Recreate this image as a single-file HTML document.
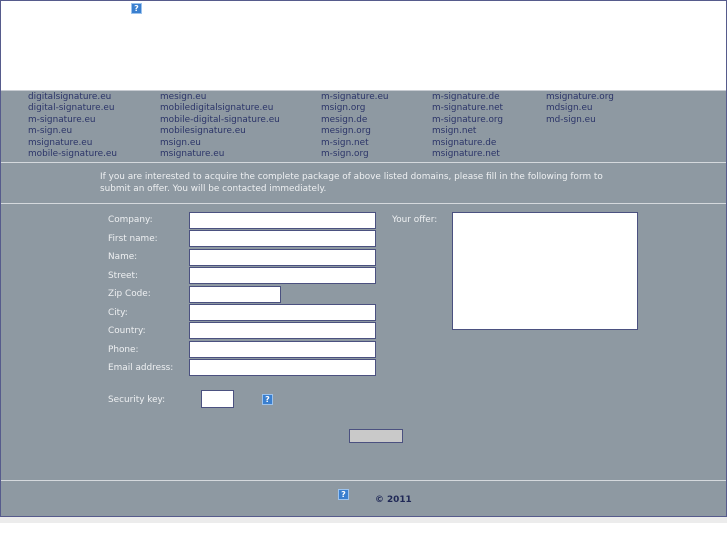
<!DOCTYPE html>
<html><head><style>
*{margin:0;padding:0;box-sizing:border-box}
body{width:727px;height:545px;background:#fff;position:relative;overflow:hidden;font-family:"DejaVu Sans","Liberation Sans",sans-serif;font-size:8.9px}
.a{position:absolute}
.frame{left:0;top:0;width:727px;height:517px;border:1px solid #565b8c;background:#8e99a2}
.top{left:1px;top:1px;width:725px;height:90px;background:#fff;border-bottom:1px solid #c8ccd2}
.d{color:#2b3468;line-height:11.4px;white-space:nowrap}
.hr{left:1px;width:725px;height:1px;background:#d5d9dd}
.l{color:#eef0f2;white-space:nowrap}
.in{background:#fff;border:1px solid #4b5180;height:17px}
.q{width:11px;height:11px;background:#3a7fcf;border:1px solid #9cc3ee;color:#fff;font-size:8px;line-height:9px;text-align:center;font-weight:bold}
</style></head><body>
<div class="a frame"></div>
<div class="a top"></div>
<div class="a q" style="left:131px;top:3px">?</div>
<div class="a d" style="left:28px;top:92px">digitalsignature.eu<br>digital-signature.eu<br>m-signature.eu<br>m-sign.eu<br>msignature.eu<br>mobile-signature.eu</div>
<div class="a d" style="left:160px;top:92px">mesign.eu<br>mobiledigitalsignature.eu<br>mobile-digital-signature.eu<br>mobilesignature.eu<br>msign.eu<br>msignature.eu</div>
<div class="a d" style="left:321px;top:92px">m-signature.eu<br>msign.org<br>mesign.de<br>mesign.org<br>m-sign.net<br>m-sign.org</div>
<div class="a d" style="left:432px;top:92px">m-signature.de<br>m-signature.net<br>m-signature.org<br>msign.net<br>msignature.de<br>msignature.net</div>
<div class="a d" style="left:546px;top:92px">msignature.org<br>mdsign.eu<br>md-sign.eu</div>
<div class="a hr" style="top:162px"></div>
<div class="a l" style="left:100px;top:172px;line-height:11.5px">If you are interested to acquire the complete package of above listed domains, please fill in the following form to<br>submit an offer. You will be contacted immediately.</div>
<div class="a hr" style="top:203px"></div>
<div class="a l" style="left:108px;top:215px">Company:</div>
<div class="a l" style="left:108px;top:234px">First name:</div>
<div class="a l" style="left:108px;top:252px">Name:</div>
<div class="a l" style="left:108px;top:271px">Street:</div>
<div class="a l" style="left:108px;top:289px">Zip Code:</div>
<div class="a l" style="left:108px;top:308px">City:</div>
<div class="a l" style="left:108px;top:326px">Country:</div>
<div class="a l" style="left:108px;top:345px">Phone:</div>
<div class="a l" style="left:108px;top:363px">Email address:</div>
<div class="a l" style="left:108px;top:395px">Security key:</div>
<div class="a l" style="left:392px;top:215px">Your offer:</div>
<div class="a in" style="left:189px;top:212px;width:187px"></div>
<div class="a in" style="left:189px;top:230px;width:187px"></div>
<div class="a in" style="left:189px;top:249px;width:187px"></div>
<div class="a in" style="left:189px;top:267px;width:187px"></div>
<div class="a in" style="left:189px;top:286px;width:92px"></div>
<div class="a in" style="left:189px;top:304px;width:187px"></div>
<div class="a in" style="left:189px;top:322px;width:187px"></div>
<div class="a in" style="left:189px;top:341px;width:187px"></div>
<div class="a in" style="left:189px;top:359px;width:187px"></div>
<div class="a in" style="left:452px;top:212px;width:186px;height:118px"></div>
<div class="a in" style="left:201px;top:390px;width:33px;height:18px"></div>
<div class="a q" style="left:262px;top:394px">?</div>
<div class="a" style="left:349px;top:429px;width:54px;height:14px;background:#c9c9c9;border:1px solid #4b5180"></div>
<div class="a hr" style="top:480px"></div>
<div class="a q" style="left:338px;top:489px">?</div>
<div class="a" style="left:375px;top:495px;color:#1f2856;font-weight:bold">© 2011</div>
<div class="a" style="left:0;top:517px;width:727px;height:6px;background:#ececec"></div>
</body></html>
